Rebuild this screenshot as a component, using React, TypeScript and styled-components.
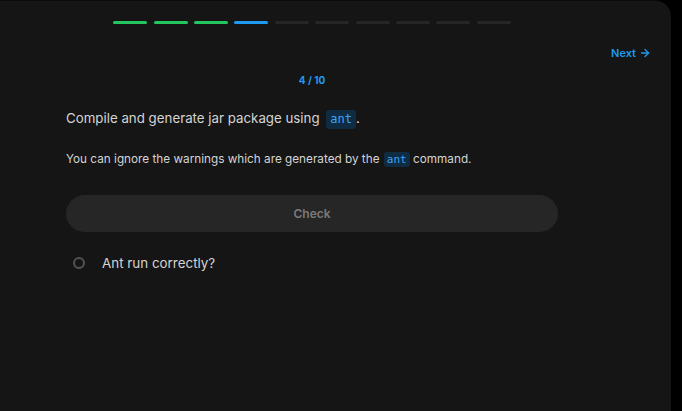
import styled, { createGlobalStyle } from "styled-components";

const GlobalStyle = createGlobalStyle`
    html, body {
        margin: 0;
        padding: 0;
        background: #000;
        font-family: Inter, "Noto Sans", sans-serif;
    }
`

const STEPS = 10
const CURRENT = 4

type SegmentState = 'done' | 'current' | 'todo'

const segmentColor = (state: SegmentState) =>
    state === 'done' ? '#22c55e' : state === 'current' ? '#1d9bf0' : '#262626'

export default function App() {
    const segments = Array.from({ length: STEPS }, (_, i): SegmentState =>
        i + 1 < CURRENT ? 'done' : i + 1 === CURRENT ? 'current' : 'todo'
    )

    return (
        <>
            <GlobalStyle />
            <Panel>
                <Progress>
                    {segments.map((s, i) => <Segment key={i} state={s} />)}
                </Progress>
                <NavRow>
                    <NextButton>
                        Next
                        <svg width="12" height="12" viewBox="0 0 24 24" fill="none" stroke="currentColor" strokeWidth="2.6" strokeLinecap="round" strokeLinejoin="round">
                            <path d="M5 12h14" />
                            <path d="m12 5 7 7-7 7" />
                        </svg>
                    </NextButton>
                </NavRow>
                <Content>
                    <Counter>{CURRENT} / {STEPS}</Counter>
                    <Title>Compile and generate jar package using <Code>ant</Code>.</Title>
                    <Note>You can ignore the warnings which are generated by the <Code small>ant</Code> command.</Note>
                    <CheckButton>Check</CheckButton>
                    <CheckItem>
                        <Radio />
                        <CheckLabel>Ant run correctly?</CheckLabel>
                    </CheckItem>
                </Content>
            </Panel>
        </>
    )
}

const Panel = styled.div`
    display: flex;
    flex-direction: column;
    width: 671px;
    height: 411px;
    box-sizing: border-box;
    background: #151515;
    border-top: 1px solid #0b0b0b;
    border-top-right-radius: 16px;
    overflow: hidden;
`

const Progress = styled.div`
    display: flex;
    justify-content: center;
    gap: 6.4px;
    width: 492px;
    margin: 20px 0 0 66px;
`

const Segment = styled.div<{ state: SegmentState }>`
    width: 34px;
    height: 3px;
    border-radius: 2px;
    background: ${({ state }) => segmentColor(state)};
`

const NavRow = styled.div`
    display: flex;
    justify-content: flex-end;
    padding: 21px 20px 0 0;
`

const NextButton = styled.button`
    display: flex;
    align-items: center;
    gap: 3px;
    padding: 0;
    border: none;
    background: none;
    color: #1d9bf0;
    font-family: Inter, "Noto Sans", sans-serif;
    font-size: 11px;
    font-weight: 600;
    line-height: 16px;
    cursor: pointer;
`

const Content = styled.div`
    display: flex;
    flex-direction: column;
    width: 492px;
    margin-left: 66px;
`

const Counter = styled.div`
    margin-top: 12px;
    text-align: center;
    color: #1d9bf0;
    font-size: 10px;
    font-weight: 700;
    line-height: 14px;
`

const Title = styled.div`
    margin-top: 21px;
    color: #d4d4d4;
    font-size: 13.3px;
    line-height: 20px;
`

const Code = styled.code<{ small?: boolean }>`
    margin-left: ${({ small }) => small ? '1px' : '3px'};
    padding: ${({ small }) => small ? '1px 3px' : '2px 4px 3px'};
    border-radius: 3px;
    background: #0f2c42;
    color: #3ea3f5;
    font-family: "DejaVu Sans Mono", "Liberation Mono", monospace;
    font-size: ${({ small }) => small ? '11px' : '12px'};
`

const Note = styled.div`
    margin-top: 21px;
    color: #d4d4d4;
    font-size: 11.75px;
    line-height: 18px;
`

const CheckButton = styled.button`
    margin-top: 26px;
    height: 37px;
    border: none;
    border-radius: 999px;
    background: #262626;
    color: #7a7a7a;
    font-family: Inter, "Noto Sans", sans-serif;
    font-size: 12px;
    font-weight: 600;
`

const CheckItem = styled.div`
    display: flex;
    align-items: center;
    gap: 17px;
    margin-top: 21px;
    padding-left: 7px;
`

const Radio = styled.span`
    width: 8px;
    height: 8px;
    border: 2px solid #525252;
    border-radius: 50%;
`

const CheckLabel = styled.span`
    color: #d4d4d4;
    font-size: 13.4px;
    line-height: 20px;
`
